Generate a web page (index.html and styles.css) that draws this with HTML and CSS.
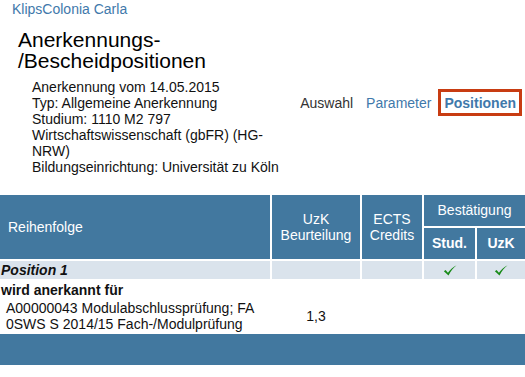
FILE: index.html
```html
<!DOCTYPE html>
<html lang="de">
<head>
  <meta charset="UTF-8" />
  <meta name="viewport" content="width=device-width, initial-scale=1.0"/>
  <title>Anerkennungs-/Bescheidpositionen</title>
  <link rel="stylesheet" href="styles.css">
</head>
<body>
  <div class="user">KlipsColonia Carla</div>

  <div class="head">
    <div class="title-block">
      <h1>Anerkennungs-<wbr>/Bescheidpositionen</h1>
      <div class="info">
        Anerkennung vom 14.05.2015<br>
        Typ: Allgemeine Anerkennung<br>
        Studium: 1110 M2 797 Wirtschaftswissenschaft (gbFR) (HG-NRW)<br>
        Bildungseinrichtung: Universität zu Köln
      </div>
    </div>
    <div class="nav">
      <span class="nav-item">Auswahl</span>
      <a class="nav-item link" href="#">Parameter</a>
      <a class="nav-item link active" href="#">Positionen</a>
    </div>
  </div>

  <table class="positions">
    <colgroup>
      <col class="c-order">
      <col class="c-grade">
      <col class="c-ects">
      <col class="c-stud">
      <col class="c-uzk">
    </colgroup>
    <thead>
      <tr>
        <th rowspan="2" class="left">Reihenfolge</th>
        <th rowspan="2">UzK<br>Beurteilung</th>
        <th rowspan="2">ECTS<br>Credits</th>
        <th colspan="2">Bestätigung</th>
      </tr>
      <tr>
        <th class="strong">Stud.</th>
        <th class="strong">UzK</th>
      </tr>
    </thead>
    <tbody>
      <tr class="pos-row">
        <td class="pos-title">Position 1</td>
        <td></td>
        <td></td>
        <td class="check"><svg width="14" height="11" viewBox="0 0 13 10"><path d="M0.8 5.6 L2.4 4.6 L4.6 7 C6.8 4.2 9.2 2 12.6 0.2 C9.7 2.6 7.3 5.4 5.1 9.7 Z" fill="#178a17"/></svg></td>
        <td class="check"><svg width="14" height="11" viewBox="0 0 13 10"><path d="M0.8 5.6 L2.4 4.6 L4.6 7 C6.8 4.2 9.2 2 12.6 0.2 C9.7 2.6 7.3 5.4 5.1 9.7 Z" fill="#178a17"/></svg></td>
      </tr>
      <tr>
        <td colspan="5" class="label">wird anerkannt für</td>
      </tr>
      <tr class="item">
        <td class="item-name">A00000043 Modulabschlussprüfung; FA 0SWS S 2014/15 Fach-/Modulprüfung</td>
        <td class="center">1,3</td>
        <td></td>
        <td></td>
        <td></td>
      </tr>
    </tbody>
    <tfoot>
      <tr>
        <td colspan="5"></td>
      </tr>
    </tfoot>
  </table>
</body>
</html>
```

FILE: styles.css
```css
body {
  margin: 0;
  font-family: "Liberation Sans", Arial, sans-serif;
  font-size: 14px;
  line-height: 16px;
  color: #111;
  background: #fff;
}
.user {
  padding: 1px 12px 0;
  color: #3f79ab;
}
.head {
  display: flex;
  align-items: center;
  margin-top: 12px;
}
.title-block {
  width: 270px;
  padding-left: 18px;
}
h1 {
  margin: 0;
  font-size: 21px;
  font-weight: normal;
  line-height: 21px;
  color: #000;
}
.info {
  margin: 8px 0 0 14px;
}
.nav {
  display: flex;
  align-items: center;
  gap: 1px;
  margin-left: auto;
  padding-right: 3px;
}
.nav-item {
  padding: 3px 3px 2px;
  border: 3px solid transparent;
  color: #333;
  text-decoration: none;
}
.nav-item.link {
  color: #3f79ab;
}
.nav-item.active {
  font-weight: bold;
  border-color: #c83c12;
}
.positions {
  width: 529px;
  margin: 18px -2px 0;
  border-collapse: separate;
  border-spacing: 2px;
  table-layout: fixed;
}
.c-order { width: 270px; }
.c-grade { width: 88px; }
.c-ects { width: 60px; }
.c-stud { width: 51px; }
.c-uzk { width: 48px; }
.positions th {
  background: #42789f;
  color: #fff;
  font-weight: normal;
  padding: 7px 2px 8px;
  text-align: center;
  vertical-align: middle;
}
.positions th.left {
  text-align: left;
  padding-left: 8px;
}
.positions th.strong {
  font-weight: bold;
}
.positions td {
  padding: 0;
  vertical-align: middle;
}
.pos-row td {
  background: #dae3ec;
  padding: 1px 1px 1px;
  height: 16px;
}
.pos-title {
  font-weight: bold;
  font-style: italic;
}
.check {
  text-align: center;
}
.check svg {
  display: block;
  margin: 0 auto;
}
.positions td.label {
  font-weight: bold;
  padding: 1px 1px 0;
}
.positions td.item-name {
  padding-left: 6px;
}
.center {
  text-align: center;
}
tfoot td {
  background: #42789f;
  height: 31px;
}
```
